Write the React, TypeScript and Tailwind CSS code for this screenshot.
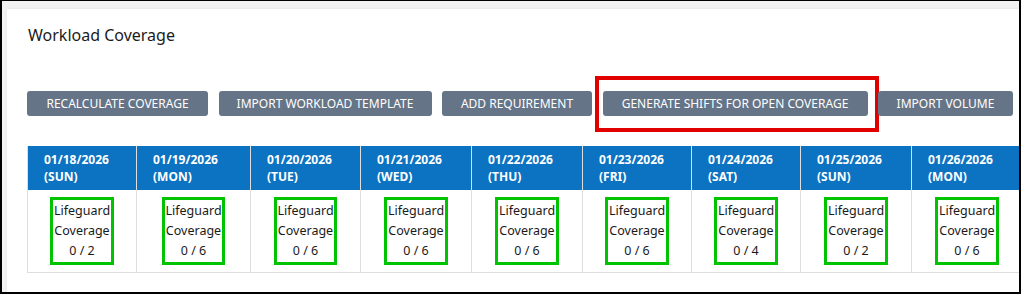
const buttons = [
  { label: "RECALCULATE COVERAGE", w: "w-[181px]" },
  { label: "IMPORT WORKLOAD TEMPLATE", w: "w-[213px]" },
  { label: "ADD REQUIREMENT", w: "w-[150px]" },
  { label: "GENERATE SHIFTS FOR OPEN COVERAGE", w: "w-[265px]" },
  { label: "IMPORT VOLUME", w: "w-[135px]" },
]

const days = [
  { date: "01/18/2026", day: "SUN", need: 2, w: "w-[110px]" },
  { date: "01/19/2026", day: "MON", need: 6, w: "w-[114px]" },
  { date: "01/20/2026", day: "TUE", need: 6, w: "w-[110px]" },
  { date: "01/21/2026", day: "WED", need: 6, w: "w-[111px]" },
  { date: "01/22/2026", day: "THU", need: 6, w: "w-[111px]" },
  { date: "01/23/2026", day: "FRI", need: 6, w: "w-[109px]" },
  { date: "01/24/2026", day: "SAT", need: 4, w: "w-[109px]" },
  { date: "01/25/2026", day: "SUN", need: 2, w: "w-[111px]" },
  { date: "01/26/2026", day: "MON", need: 6, w: "w-[111px]" },
]

const App = () => {
  return (
    <div
      className="h-[294px] w-[1021px] box-border border-black border-t border-l-2 border-r-2 border-b-2 bg-[#f3f3f3] pl-[5px] pt-[8px] flex overflow-hidden"
      style={{ fontFamily: '"Noto Sans", "Open Sans", sans-serif' }}
    >
      <div className="flex-1 bg-white shadow-[0_0_3px_rgba(0,0,0,0.08)] overflow-hidden pt-[14px] pl-[20px]">
        <h1 className="text-[16px] leading-[24px] text-[#1b1b1b] pl-[1px]">Workload Coverage</h1>

        <div className="flex gap-[10.5px] mt-[43px]">
          {buttons.map((b, i) => (
            <span key={b.label} className="relative shrink-0">
              <button className={`${b.w} h-[25px] rounded-[3px] bg-[#667487] text-white text-[12px] leading-[25px] text-center whitespace-nowrap`}>
                {b.label}
              </button>
              {i === 3 && (
                <span className="absolute -left-[8px] -top-[14px] -right-[11px] -bottom-[16px] border-4 border-[#e00000] pointer-events-none" />
              )}
            </span>
          ))}
        </div>

        <div className="mt-[30px] flex w-max">
          {days.map((d, i) => (
            <div
              key={d.date}
              className={`${d.w} shrink-0 flex flex-col border-[#dedede] border-b border-r ${i === 0 ? "border-l" : ""}`}
            >
              <div className="bg-[#0b73c1] h-[44px] px-4 pt-[5px] text-white font-bold text-[12px] leading-[17px]">
                <div>{d.date}</div>
                <div>({d.day})</div>
              </div>
              <div className="flex justify-center pt-[7px] pb-[7px]">
                <div className="border-[3px] border-[#00c400] py-[1px] px-[0.5px] text-center text-[12.5px] leading-[20px] text-[#1a1a1a]">
                  <div>Lifeguard</div>
                  <div>Coverage</div>
                  <div>0 / {d.need}</div>
                </div>
              </div>
            </div>
          ))}
        </div>
      </div>
    </div>
  )
}

export default App
